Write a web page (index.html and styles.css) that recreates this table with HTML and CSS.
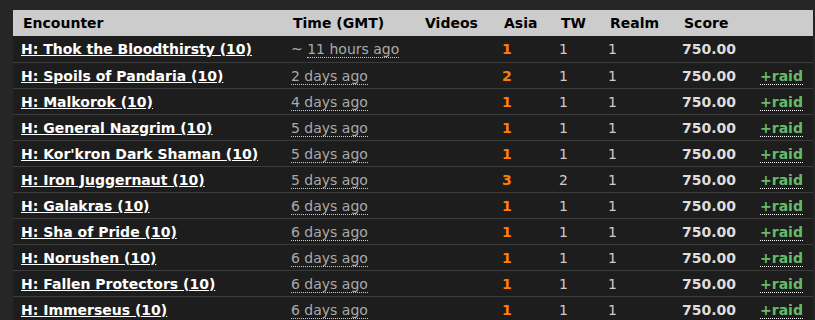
FILE: index.html
```html
<!DOCTYPE html>
<html>
<head>
<meta charset="utf-8">
<link rel="stylesheet" href="styles.css">
</head>
<body>
<table class="kills">
  <colgroup>
    <col class="c-enc"><col class="c-time"><col class="c-vid"><col class="c-asia"><col class="c-tw"><col class="c-realm"><col class="c-score"><col class="c-raid">
  </colgroup>
  <thead>
    <tr><th>Encounter</th><th>Time (GMT)</th><th>Videos</th><th>Asia</th><th>TW</th><th>Realm</th><th>Score</th><th></th></tr>
  </thead>
  <tbody>
    <tr><td><a class="enc" href="#">H: Thok the Bloodthirsty (10)</a></td><td class="time">~ <span class="ago">11 hours ago</span></td><td></td><td class="rank">1</td><td class="num">1</td><td class="num">1</td><td class="score">750.00</td><td></td></tr>
    <tr><td><a class="enc" href="#">H: Spoils of Pandaria (10)</a></td><td class="time"><span class="ago">2 days ago</span></td><td></td><td class="rank">2</td><td class="num">1</td><td class="num">1</td><td class="score">750.00</td><td><a class="raid" href="#">+raid</a></td></tr>
    <tr><td><a class="enc" href="#">H: Malkorok (10)</a></td><td class="time"><span class="ago">4 days ago</span></td><td></td><td class="rank">1</td><td class="num">1</td><td class="num">1</td><td class="score">750.00</td><td><a class="raid" href="#">+raid</a></td></tr>
    <tr><td><a class="enc" href="#">H: General Nazgrim (10)</a></td><td class="time"><span class="ago">5 days ago</span></td><td></td><td class="rank">1</td><td class="num">1</td><td class="num">1</td><td class="score">750.00</td><td><a class="raid" href="#">+raid</a></td></tr>
    <tr><td><a class="enc" href="#">H: Kor'kron Dark Shaman (10)</a></td><td class="time"><span class="ago">5 days ago</span></td><td></td><td class="rank">1</td><td class="num">1</td><td class="num">1</td><td class="score">750.00</td><td><a class="raid" href="#">+raid</a></td></tr>
    <tr><td><a class="enc" href="#">H: Iron Juggernaut (10)</a></td><td class="time"><span class="ago">5 days ago</span></td><td></td><td class="rank">3</td><td class="num">2</td><td class="num">1</td><td class="score">750.00</td><td><a class="raid" href="#">+raid</a></td></tr>
    <tr><td><a class="enc" href="#">H: Galakras (10)</a></td><td class="time"><span class="ago">6 days ago</span></td><td></td><td class="rank">1</td><td class="num">1</td><td class="num">1</td><td class="score">750.00</td><td><a class="raid" href="#">+raid</a></td></tr>
    <tr><td><a class="enc" href="#">H: Sha of Pride (10)</a></td><td class="time"><span class="ago">6 days ago</span></td><td></td><td class="rank">1</td><td class="num">1</td><td class="num">1</td><td class="score">750.00</td><td><a class="raid" href="#">+raid</a></td></tr>
    <tr><td><a class="enc" href="#">H: Norushen (10)</a></td><td class="time"><span class="ago">6 days ago</span></td><td></td><td class="rank">1</td><td class="num">1</td><td class="num">1</td><td class="score">750.00</td><td><a class="raid" href="#">+raid</a></td></tr>
    <tr><td><a class="enc" href="#">H: Fallen Protectors (10)</a></td><td class="time"><span class="ago">6 days ago</span></td><td></td><td class="rank">1</td><td class="num">1</td><td class="num">1</td><td class="score">750.00</td><td><a class="raid" href="#">+raid</a></td></tr>
    <tr><td><a class="enc" href="#">H: Immerseus (10)</a></td><td class="time"><span class="ago">6 days ago</span></td><td></td><td class="rank">1</td><td class="num">1</td><td class="num">1</td><td class="score">750.00</td><td><a class="raid" href="#">+raid</a></td></tr>
  </tbody>
</table>
</body>
</html>
```
FILE: styles.css
```css
html, body {
  margin: 0;
  padding: 0;
  background: #262626;
}
body {
  padding: 10px 0 0 13px;
  font-family: "DejaVu Sans", Verdana, sans-serif;
  font-size: 14px;
}
.kills {
  width: 800px;
  table-layout: fixed;
  border-collapse: collapse;
  background: #1d1d1d;
}
.c-enc { width: 270px; }
.c-time { width: 132px; }
.c-vid { width: 79px; }
.c-asia { width: 57px; }
.c-tw { width: 49px; }
.c-realm { width: 74px; }
.c-score { width: 78px; }
.c-raid { width: 61px; }

.kills th {
  background: #cccccc;
  color: #000;
  font-weight: bold;
  text-align: left;
  height: 26px;
  padding: 0 0 0 10px;
  box-sizing: border-box;
  white-space: nowrap;
}
.kills td {
  height: 26px;
  box-sizing: border-box;
  padding: 1px 0 0 8px;
  border-bottom: 1px solid #3c3c3c;
  color: #cccccc;
  white-space: nowrap;
  vertical-align: middle;
}
.kills .enc {
  color: #ffffff;
  font-weight: bold;
  text-decoration: underline;
}
.kills .time { color: #aaaaaa; }
.kills .ago {
  border-bottom: 1px dotted #cccccc;
}
.kills .rank {
  color: #ff7f00;
  font-weight: bold;
}
.kills .score {
  font-weight: bold;
  color: #dddddd;
}
.kills .raid {
  color: #66bb6a;
  font-weight: bold;
  text-decoration: none;
  border-bottom: 1px dotted #ffffff;
}
```
